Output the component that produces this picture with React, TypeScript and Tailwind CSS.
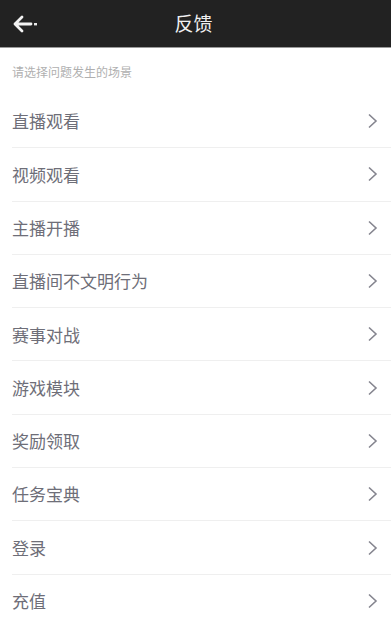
import React from "react";

const items = ["直播观看", "视频观看", "主播开播", "直播间不文明行为", "赛事对战", "游戏模块", "奖励领取", "任务宝典", "登录", "充值"];

export default function App() {
  return (
    <div className="w-[391px] h-[620px] overflow-hidden bg-white" style={{ fontFamily: '"Noto Sans CJK SC", "Noto Sans", sans-serif' }}>
      <div className="h-[48px] bg-[#222222] relative flex items-center justify-center border-b border-[#9a9a9a]">
        <svg className="absolute left-[12px] top-[15px]" width="28" height="18" viewBox="0 0 28 18">
          <path d="M10 2 L3 9 L10 16 M3 9 L19 9" stroke="#f2f2f2" strokeWidth="2.8" fill="none" strokeLinecap="round" strokeLinejoin="round" />
          <rect x="22" y="8" width="3" height="2.4" fill="#e8e8e8" />
        </svg>
        <span className="text-[19px] text-[#f0f0f0] pr-[4px]">反馈</span>
      </div>
      <div className="h-[47px] pl-[12px] pt-[14px] text-[12px] text-[#b0b0b0] leading-[20px]">请选择问题发生的场景</div>
      <div className="pl-[12px]">
        {items.map((t) => (
          <div key={t} className="h-[53.3px] flex items-center justify-between border-b border-[#efefef] pr-[13px]">
            <span className="text-[17px] text-[#6e6e78]">{t}</span>
            <svg width="11" height="16" viewBox="0 0 11 16">
              <path d="M2 1.5 L9 8 L2 14.5" stroke="#85858f" strokeWidth="1.6" fill="none" />
            </svg>
          </div>
        ))}
      </div>
    </div>
  );
}
